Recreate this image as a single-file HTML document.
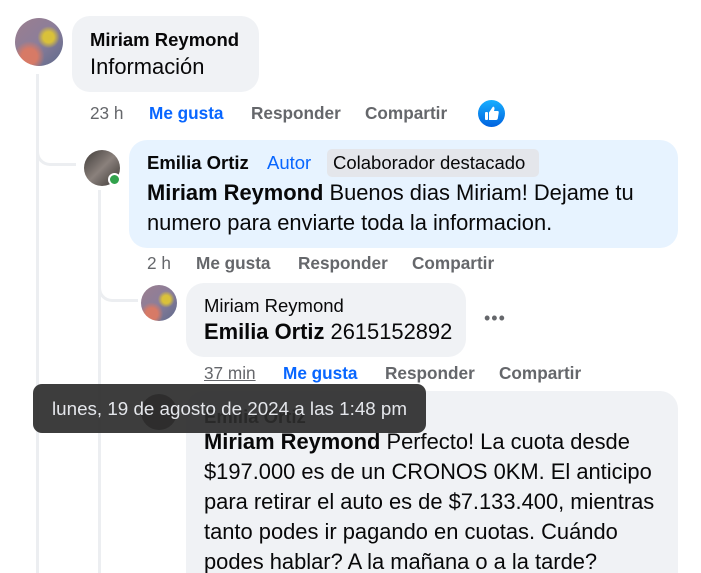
<!DOCTYPE html>
<html><head><meta charset="utf-8"><style>
*{margin:0;padding:0;box-sizing:border-box}
html,body{width:701px;height:573px;overflow:hidden}
body{background:#fff;font-family:"Liberation Sans",sans-serif;color:#080809;position:relative}
.a{position:absolute;white-space:nowrap}
.bub{position:absolute;border-radius:18px;background:#f0f2f5}
.av{position:absolute;border-radius:50%;overflow:hidden}
.nm{font-size:18.5px;font-weight:bold}
.tx{font-size:21.9px;line-height:30px}
.act{font-size:17.2px;font-weight:bold;color:#65676b}
.line{position:absolute;background:#eceef1}
</style></head><body>
<div class="line" style="left:36px;top:74px;width:3px;height:499px"></div>
<div style="position:absolute;left:36px;top:140px;width:40px;height:26px;border-left:3px solid #eceef1;border-bottom:3px solid #eceef1;border-bottom-left-radius:14px"></div>
<div class="line" style="left:98px;top:190px;width:3px;height:383px"></div>
<div style="position:absolute;left:98px;top:275px;width:40px;height:27px;border-left:3px solid #eceef1;border-bottom:3px solid #eceef1;border-bottom-left-radius:14px"></div>

<div class="av" style="left:15px;top:18px;width:48px;height:48px;background:radial-gradient(circle at 70% 40%,#d9c13a 0 12%,transparent 25%),radial-gradient(circle at 30% 80%,#d77a66 0 15%,transparent 30%),linear-gradient(135deg,#9b7f8e,#8c7e9a 50%,#5e6a8c)"></div>
<div class="bub" style="left:72px;top:16px;width:187px;height:76px"></div>
<div class="a nm" style="left:90px;top:29px">Miriam Reymond</div>
<div class="a tx" style="left:90px;top:52px">Información</div>
<div class="a act" style="left:90px;top:103px;font-weight:normal">23 h</div>
<div class="a act" style="left:149px;top:103px;color:#0866ff">Me gusta</div>
<div class="a act" style="left:251px;top:103px">Responder</div>
<div class="a act" style="left:365px;top:103px">Compartir</div>
<svg class="a" style="left:478px;top:100px" width="27" height="27" viewBox="0 0 27 27"><defs><linearGradient id="g" x1="0" y1="0" x2="0" y2="1"><stop offset="0" stop-color="#18afff"/><stop offset="1" stop-color="#0062df"/></linearGradient></defs><circle cx="13.5" cy="13.5" r="13.5" fill="url(#g)"/><rect x="7" y="12" width="3" height="8" rx="1" fill="#fff"/><path d="M11 12.5 L14 8 Q15 6 16 7 Q17 8 16 11 L19.5 11 Q21 11 20.7 12.7 L19.8 18.5 Q19.5 20 18 20 L11 20 Z" fill="#fff"/></svg>

<div class="av" style="left:84px;top:150px;width:36px;height:36px;background:linear-gradient(135deg,#3f3a38,#8a817c 50%,#3a3532)"></div>
<div class="a" style="left:108px;top:173px;width:13px;height:13px;border-radius:50%;background:#31a24c;border:2px solid #fff"></div>
<div class="bub" style="left:129px;top:140px;width:549px;height:108px;background:#e7f3ff"></div>
<div class="a nm" style="left:147px;top:152px">Emilia Ortiz</div>
<div class="a" style="left:267px;top:152px;font-size:18.5px;color:#0866ff">Autor</div>
<div class="a" style="left:327px;top:149px;width:212px;height:28px;background:#e4e6eb;border-radius:5px;font-size:18.5px;padding:3px 0 0 6px">Colaborador destacado</div>
<div class="a tx" style="left:147px;top:178px"><b>Miriam Reymond</b> Buenos dias Miriam! Dejame tu</div>
<div class="a tx" style="left:147px;top:208px">numero para enviarte toda la informacion.</div>
<div class="a act" style="left:147px;top:253px;font-weight:normal">2 h</div>
<div class="a act" style="left:196px;top:253px">Me gusta</div>
<div class="a act" style="left:298px;top:253px">Responder</div>
<div class="a act" style="left:412px;top:253px">Compartir</div>

<div class="av" style="left:141px;top:285px;width:36px;height:36px;background:radial-gradient(circle at 70% 40%,#d9c13a 0 12%,transparent 25%),radial-gradient(circle at 30% 80%,#d77a66 0 15%,transparent 30%),linear-gradient(135deg,#9b7f8e,#8c7e9a 50%,#5e6a8c)"></div>
<div class="bub" style="left:186px;top:283px;width:280px;height:74px"></div>
<div class="a" style="left:204px;top:295px;font-size:18.5px">Miriam Reymond</div>
<div class="a tx" style="left:204px;top:317px"><b>Emilia Ortiz</b> 2615152892</div>
<div class="a" style="left:484px;top:308px;font-size:18px;color:#65676b;letter-spacing:1px">•••</div>
<div class="a act" style="left:204px;top:363px;font-weight:normal;text-decoration:underline">37 min</div>
<div class="a act" style="left:283px;top:363px;color:#0866ff">Me gusta</div>
<div class="a act" style="left:385px;top:363px">Responder</div>
<div class="a act" style="left:499px;top:363px">Compartir</div>

<div class="av" style="left:141px;top:394px;width:36px;height:36px;background:#3e3a38"></div>
<div class="bub" style="left:186px;top:391px;width:492px;height:182px;border-bottom-left-radius:0;border-bottom-right-radius:0"></div>
<div class="a nm" style="left:204px;top:406px">Emilia Ortiz</div>
<div class="a tx" style="left:204px;top:427px"><b>Miriam Reymond</b> Perfecto! La cuota desde</div>
<div class="a tx" style="left:204px;top:457px">$197.000 es de un CRONOS 0KM. El anticipo</div>
<div class="a tx" style="left:204px;top:487px">para retirar el auto es de $7.133.400, mientras</div>
<div class="a tx" style="left:204px;top:517px">tanto podes ir pagando en cuotas. Cuándo</div>
<div class="a tx" style="left:204px;top:547px">podes hablar? A la mañana o a la tarde?</div>

<div class="a" style="left:33px;top:384px;width:393px;height:49px;background:rgba(45,45,45,0.92);border-radius:9px;color:#e4e6eb;font-size:18.8px;padding:14px 0 0 19px">lunes, 19 de agosto de 2024 a las 1:48 pm</div>
</body></html>
